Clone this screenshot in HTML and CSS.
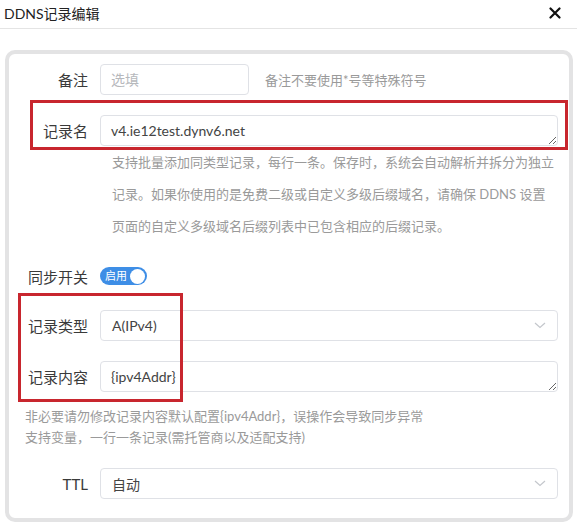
FILE: index.html
```html
<!DOCTYPE html>
<html lang="zh-CN">
<head>
<meta charset="utf-8">
<title>DDNS记录编辑</title>
<link rel="stylesheet" href="styles.css">
</head>
<body>
<div class="dialog">
  <div class="header">
    <span class="title">DDNS记录编辑</span>
    <span class="close" aria-label="关闭">
      <svg width="12" height="12" viewBox="0 0 12 12"><path d="M1.5 1.5L10.5 10.5M10.5 1.5L1.5 10.5" stroke="#111" stroke-width="2.2" stroke-linecap="round"/></svg>
    </span>
  </div>
  <div class="card">
    <div class="row">
      <label class="label">备注</label>
      <input class="input short" placeholder="选填">
      <span class="hint">备注不要使用*号等特殊符号</span>
    </div>
    <div class="row gap20">
      <label class="label">记录名</label>
      <textarea class="textarea" rows="1">v4.ie12test.dynv6.net</textarea>
    </div>
    <p class="help">支持批量添加同类型记录，每行一条。保存时，系统会自动解析并拆分为独立记录。如果你使用的是免费二级或自定义多级后缀域名，请确保 DDNS 设置页面的自定义多级域名后缀列表中已包含相应的后缀记录。</p>
    <div class="row switch-row">
      <label class="label">同步开关</label>
      <span class="switch"><span class="switch-text">启用</span><span class="knob"></span></span>
    </div>
    <div class="row gap23">
      <label class="label">记录类型</label>
      <div class="select"><span>A(IPv4)</span><svg class="chev" width="12" height="7" viewBox="0 0 12 7"><path d="M1 1L6 5.5L11 1" fill="none" stroke="#c4c7cc" stroke-width="1.2"/></svg></div>
    </div>
    <div class="row gap20">
      <label class="label">记录内容</label>
      <textarea class="textarea" rows="1">{ipv4Addr}</textarea>
    </div>
    <p class="help2">非必要请勿修改记录内容默认配置{ipv4Addr}，误操作会导致同步异常<br>支持变量，一行一条记录(需托管商以及适配支持)</p>
    <div class="row gap20">
      <label class="label">TTL</label>
      <div class="select"><span>自动</span><svg class="chev" width="12" height="7" viewBox="0 0 12 7"><path d="M1 1L6 5.5L11 1" fill="none" stroke="#c4c7cc" stroke-width="1.2"/></svg></div>
    </div>
  </div>
  <div class="mark mark-name"></div>
  <div class="mark mark-type"></div>
</div>
</body>
</html>
```

FILE: styles.css
```css
* { box-sizing: border-box; }
html, body { margin: 0; padding: 0; background: #fff; }
body {
  font-family: Lato, "Noto Sans CJK SC", sans-serif;
  color: #333;
  width: 577px;
  height: 530px;
  overflow: hidden;
}
.dialog { position: relative; width: 577px; height: 530px; }
.header {
  height: 29px;
  border-bottom: 1px solid #e4e4e4;
  display: flex;
  align-items: center;
  justify-content: space-between;
  padding: 0 16px 2px 4px;
}
.title { font-size: 14px; color: #222; }
.close { display: flex; width: 12px; height: 12px; }
.card {
  margin: 21px 0 0 5px;
  width: 568px;
  height: 472px;
  border: 4px solid #e3e3e4;
  border-radius: 10px;
  padding: 10px 11px 0 0;
}
.row { display: flex; align-items: center; }
.gap20 { margin-top: 20px; }
.gap23 { margin-top: 23px; }
.label {
  width: 91px;
  flex: none;
  padding-right: 12px;
  text-align: right;
  font-size: 15px;
  color: #3a3a3a;
}
.input, .textarea, .select {
  height: 31px;
  border: 1px solid #dfe1e6;
  border-radius: 4px;
  font-family: Lato, "Noto Sans CJK SC", sans-serif;
  font-size: 14px;
  color: #444;
  background: #fff;
}
.input { padding: 0 10px; outline: none; }
.input::placeholder { color: #b6b8bc; }
.short { width: 149px; flex: none; }
.hint { margin-left: 16px; font-size: 13px; color: #9a9a9a; }
.textarea {
  flex: 1;
  padding: 4px 10px;
  line-height: 21px;
  resize: vertical;
  outline: none;
  overflow: hidden;
  display: block;
}
.help {
  margin: 0 0 0 103px;
  font-size: 13px;
  line-height: 32px;
  color: #9a9a9a;
}
.switch-row { margin-top: 23px; height: 22px; }
.switch {
  width: 47px;
  height: 18px;
  border-radius: 9px;
  background: #3e8ee6;
  display: flex;
  align-items: center;
  justify-content: space-between;
  padding: 0 2px 0 5px;
}
.switch-text { font-size: 11px; color: #fff; line-height: 18px; }
.knob { width: 15px; height: 15px; border-radius: 50%; background: #fff; }
.select {
  flex: 1;
  display: flex;
  align-items: center;
  justify-content: space-between;
  padding: 0 11px;
}
.help2 {
  margin: 14px 0 0 16px;
  font-size: 13px;
  line-height: 21px;
  color: #9a9a9a;
}
.mark {
  position: absolute;
  border: 3px solid #c8262e;
  pointer-events: none;
}
.mark-name { left: 30px; top: 100px; width: 538px; height: 50px; }
.mark-type { left: 18px; top: 293px; width: 165px; height: 109px; }
```
